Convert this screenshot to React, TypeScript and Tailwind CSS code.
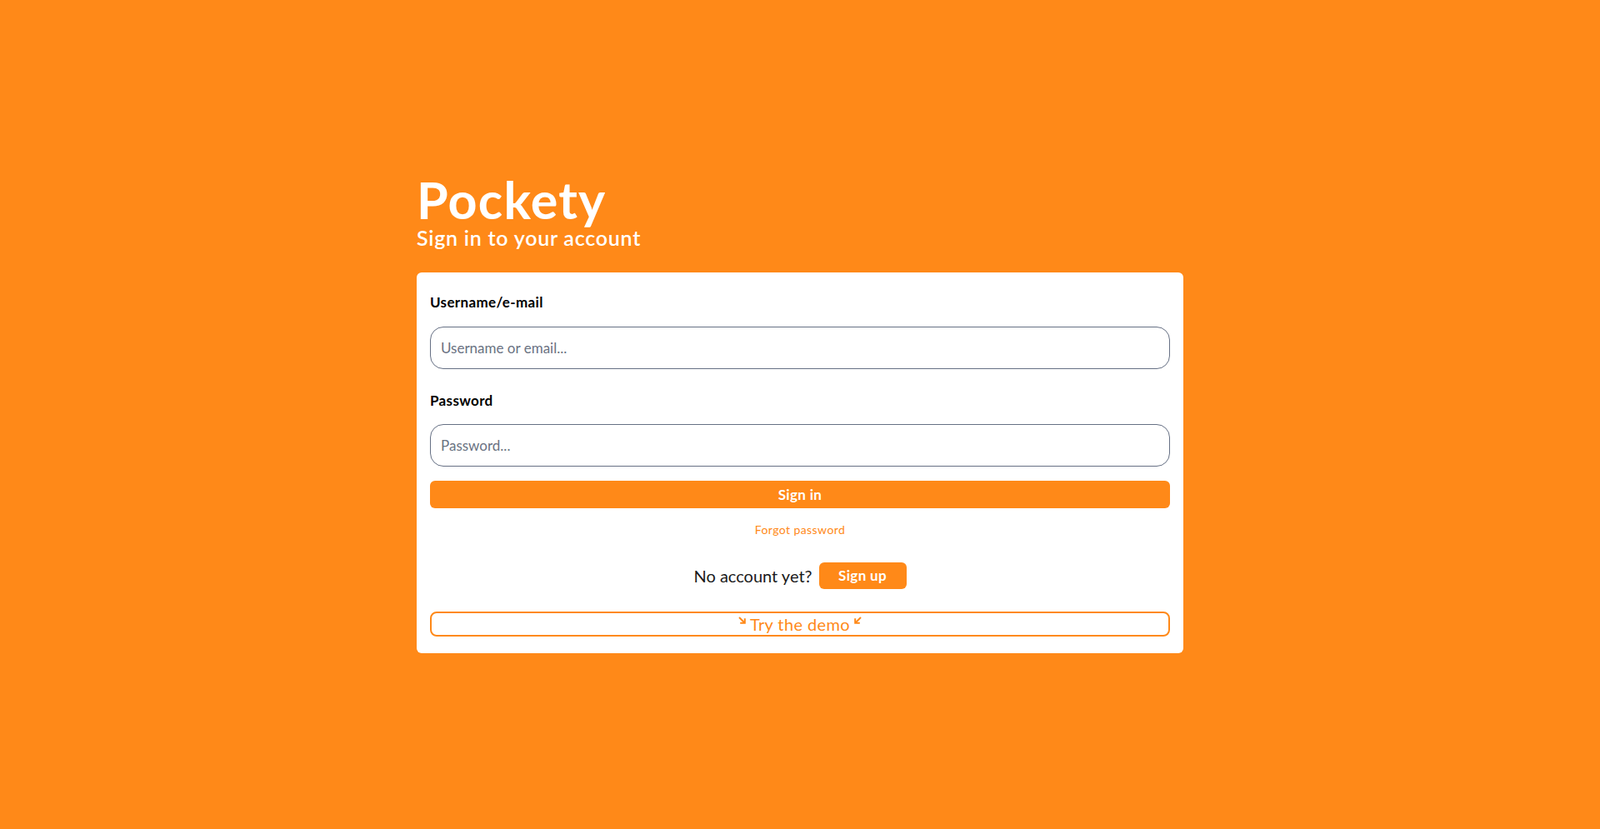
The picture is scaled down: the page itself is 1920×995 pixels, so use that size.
const Arrow = ({ flip }: { flip?: boolean }) => (
  <svg
    viewBox="0 0 9 9"
    className={`w-[9px] h-[9px] self-start mt-[4px] ${flip ? "ml-[5px] -scale-x-100" : "mr-[5px]"}`}
    fill="none"
    stroke="#ff8918"
    strokeWidth="2"
  >
    <path d="M1 1 L7.5 7.5" />
    <path d="M7.8 2.2 V7.8 H2.2" />
  </svg>
);

const App = () => {
  return (
    <div
      className="min-h-screen w-full bg-[#ff8918] flex items-center justify-center"
      style={{ fontFamily: "Lato, 'Noto Sans', sans-serif" }}
    >
      <div className="w-[920px] -mt-[2px]">
        <h1 className="text-[61px] font-bold leading-none tracking-[0.02em] text-white">Pockety</h1>
        <p className="text-[25px] font-semibold leading-[30px] tracking-[0.03em] text-white">
          Sign in to your account
        </p>

        <div className="mt-[27px] bg-white rounded-md px-4 pt-6 pb-5">
          <label className="block text-[17px] font-bold text-black leading-6 tracking-[0.02em]">
            Username/e-mail
          </label>
          <input
            type="text"
            placeholder="Username or email..."
            className="mt-[17px] block w-full h-[51px] rounded-2xl border border-[#667084] px-3 text-[17px] text-gray-800 placeholder:text-gray-500 outline-none"
          />

          <label className="mt-[26px] block text-[17px] font-bold text-black leading-6 tracking-[0.02em]">
            Password
          </label>
          <input
            type="password"
            placeholder="Password..."
            className="mt-4 block w-full h-[51px] rounded-2xl border border-[#667084] px-3 text-[17px] text-gray-800 placeholder:text-gray-500 outline-none"
          />

          <button className="mt-[17px] w-full h-[33px] rounded-md bg-[#ff8918] text-white font-bold text-[17px] tracking-[0.02em]">
            Sign in
          </button>

          <p className="mt-4 text-center text-[14px] leading-5 tracking-[0.03em] text-[#ff8918]">
            Forgot password
          </p>

          <div className="mt-[29px] flex items-center justify-center gap-2">
            <span className="text-[20px] text-[#1a1a1a]">No account yet?</span>
            <button className="h-8 w-[105px] rounded-md bg-[#ff8918] text-white font-bold text-[17px] tracking-[0.02em]">
              Sign up
            </button>
          </div>

          <button className="mt-[27px] w-full h-[30px] rounded-lg border-2 border-[#ff8918] text-[#ff8918] text-[20px] leading-none tracking-[0.02em] flex items-center justify-center">
            <Arrow />
            Try the demo
            <Arrow flip />
          </button>
        </div>
      </div>
    </div>
  );
};

export default App;
